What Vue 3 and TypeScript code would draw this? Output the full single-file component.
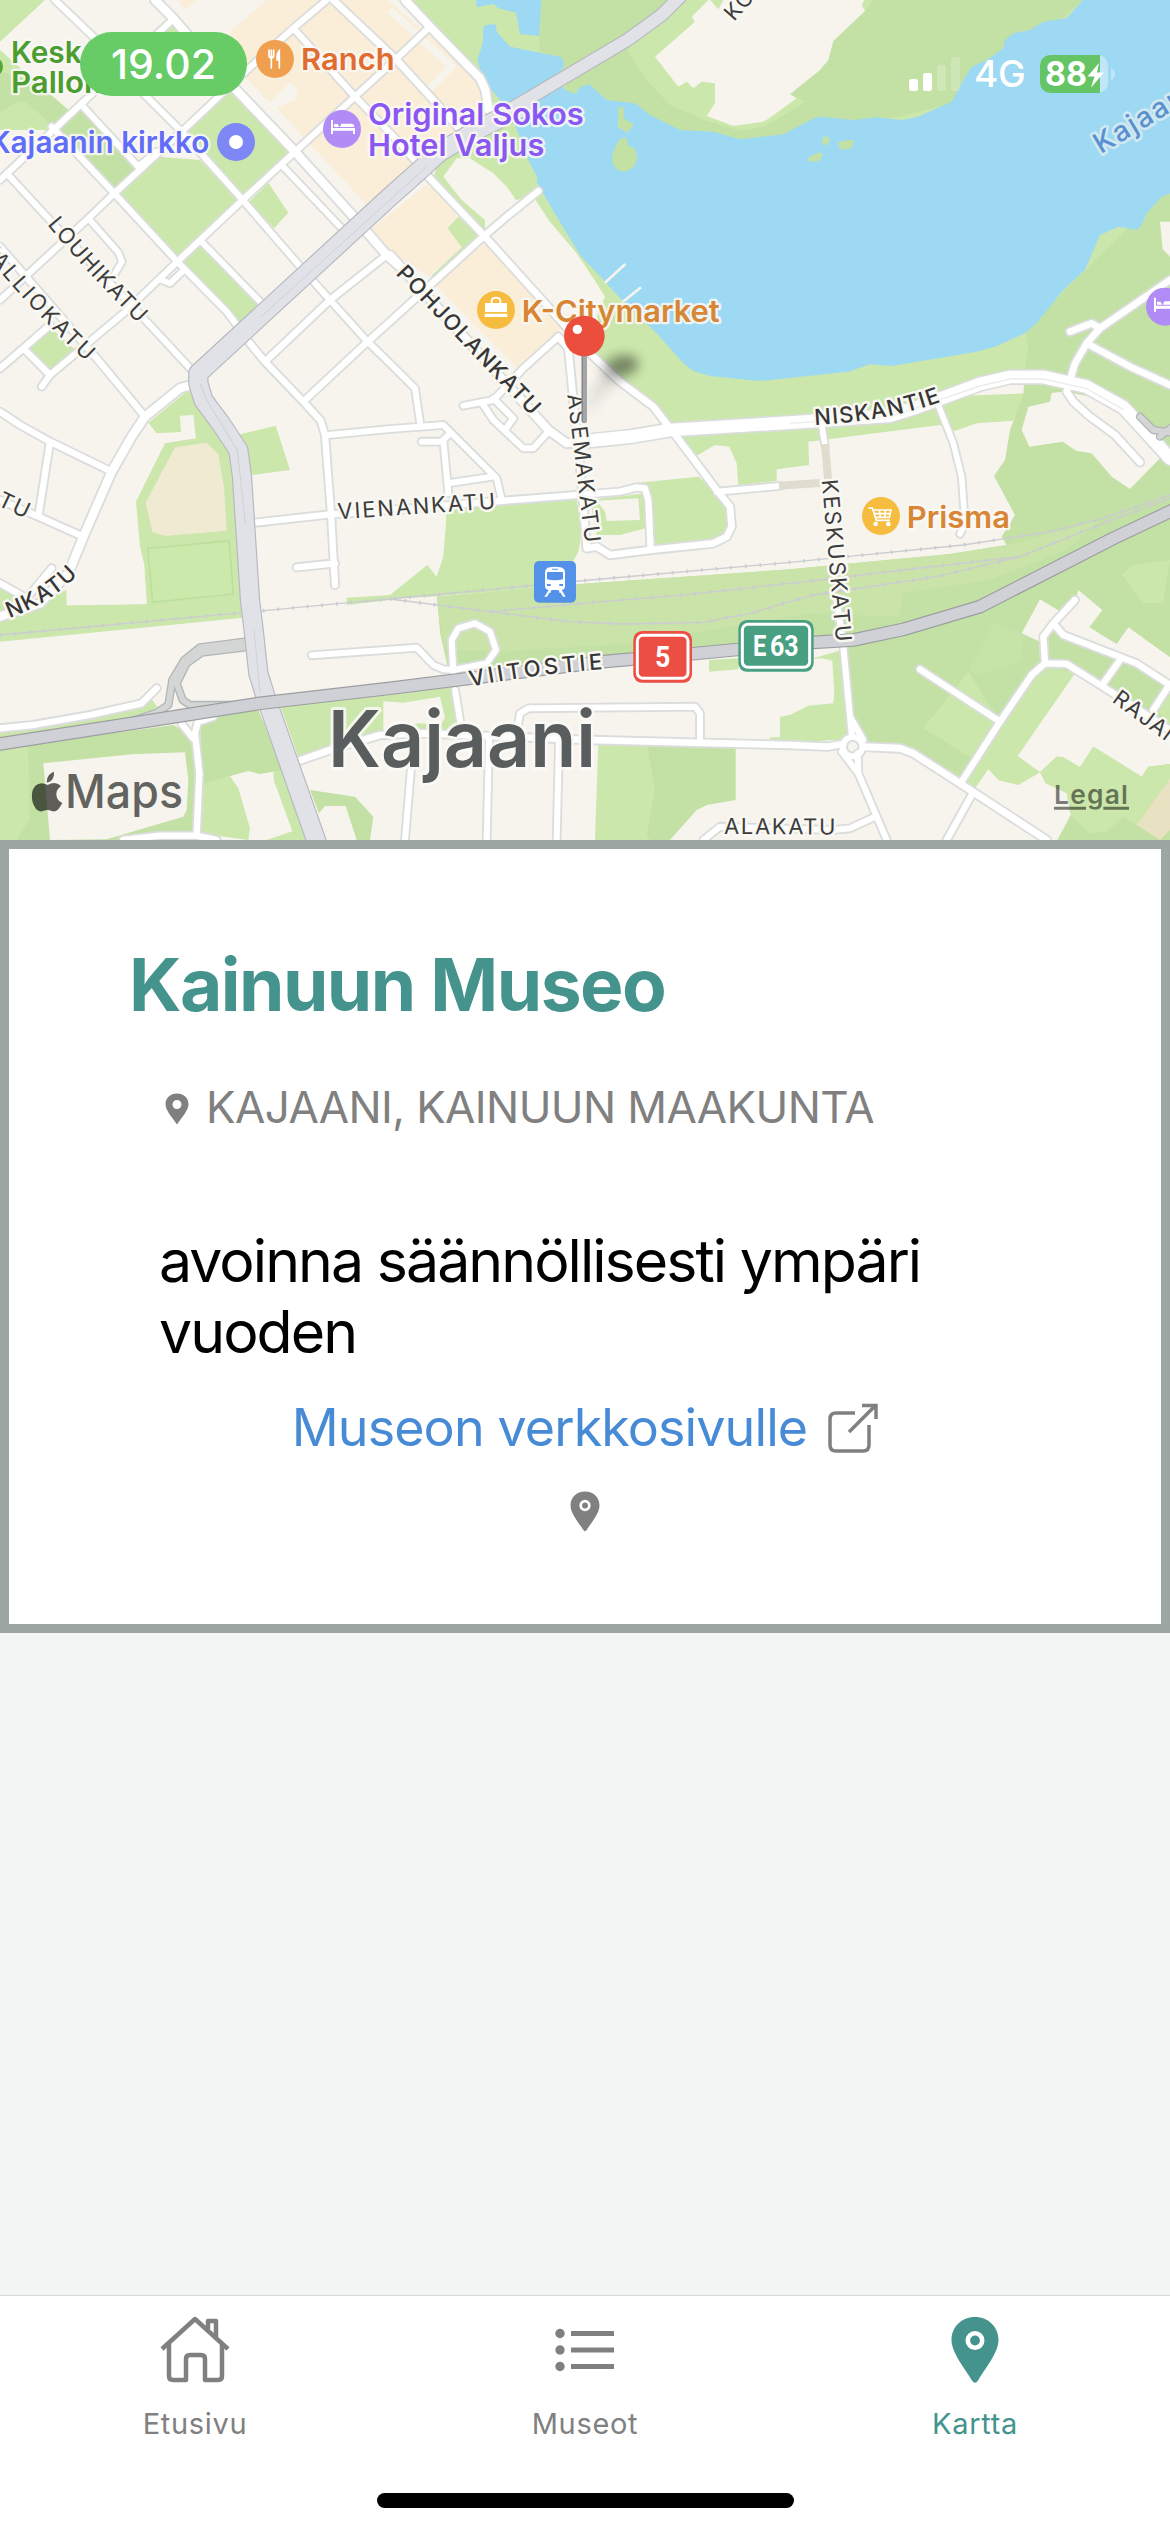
<script setup lang="ts">
interface Area {
  fill: string
  d: string
}

interface Street {
  w: number
  d: string
}

interface StreetName {
  id: string
  text: string
  d: string
  len?: number
  end?: boolean
  bold?: boolean
}

interface Poi {
  lines: string[]
  x: number
  y: number
  color: string
  widths?: number[]
  end?: boolean
}

const LAND = '#f6f4ed'
const PARK = '#cbe7ab'
const WOOD = '#c3e0a5'
const SHOPS = '#faeed9'

// Map units: three per CSS pixel.
const areas: Area[] = [
  // shops around the centre
  { fill: SHOPS, d: 'M800 0H1165L1290 110L1450 245L1465 330L1380 400L1250 505L1100 615L830 325L885 300L895 275L870 245L810 310L740 235L690 95Z' },
  { fill: SHOPS, d: 'M530 0H592L560 28Z' },
  { fill: SHOPS, d: 'M1110 690L1285 550L1375 650L1343 685L1385 742L1285 830L1170 750Z' },
  { fill: SHOPS, d: 'M1460 725L1690 980L1560 1112L1300 850Z' },
  // river banks
  { fill: PARK, d: 'M1230 0L1290 75L1455 245L1475 340L1340 430L1300 530L1455 700L1455 660L1385 600L1330 530L1370 475L1410 475L1480 520L1520 560L1548 600L1600 590L1650 665L1730 760L1790 850L1815 890L1770 1000L1790 1080L1860 1150L1950 1220L2005 1275L2370 1262L2700 1240L3070 1140L3510 1300V0Z' },
  { fill: PARK, d: 'M1375 650L1440 710L1280 850L1300 822L1385 742L1343 685Z' },
  { fill: PARK, d: 'M2030 1310L2085 1370L2145 1335L2188 1340L2210 1390L2215 1455L2330 1443V1408L2427 1395L2425 1325L2820 1275L2865 1293L2930 1270L3040 1262L3080 1180L2810 1190L2700 1240L2370 1285Z' },
  { fill: WOOD, d: 'M1622 0L1618 150L1690 200L1700 300L1900 330L2040 420L2220 440L2370 430L2900 300L3250 0H2620L2595 33L2500 123L2370 283L2415 305L2300 378L2220 392L2120 362L2010 315L1940 240L1880 150L1980 50L2020 0Z' },
  { fill: LAND, d: 'M2125 0L2075 50L2085 65L1965 170L2035 260L2060 245L2080 265L2105 245L2145 250V310L2120 348L2200 378L2290 365L2310 353L2390 295L2370 283L2460 210L2485 180L2500 123L2595 33L2585 15L2593 0Z' },
  { fill: PARK, d: 'M2130 0H2170L2155 28Z' },
  { fill: WOOD, d: 'M3510 560L3075 990L3085 1035L3075 1110L3070 1185L3030 1290L3015 1380L2982 1428L3045 1545L3005 1610L3020 1635L2850 1662L2370 1708L1770 1750L1310 1790L1320 1900L1340 2000L1780 1995L2530 1930L2560 2220L2700 2240L2880 2350L3160 2520H3510Z' },
  { fill: '#c9e3a9', d: 'M1310 1790L1770 1750L2370 1708L2850 1662L3020 1635L3300 1560L3200 1650L2970 1740L2710 1780L2700 1850L2430 1840L1900 1930L1500 1955L1330 1950Z' },
  { fill: LAND, d: 'M3480 665H3510V770L3488 748Z' },
  { fill: LAND, d: 'M3155 1178L3150 1205L3085 1220L3065 1290L3088 1340L3188 1325L3230 1353L3275 1360L3335 1430L3390 1467L3480 1375L3400 1260L3270 1190L3200 1175Z' },
  // east side
  { fill: PARK, d: 'M2440 1975L2525 1950L2550 2220L2460 2220L2310 2215V2000Z' },
  { fill: LAND, d: 'M2215 1985L2440 1977L2465 1975L2497 1982L2503 2080L2500 2110L2425 2117L2340 2160V2212H2310Z' },
  { fill: PARK, d: 'M2905 2015L2770 2185L2915 2275L3000 2165ZM3365 1725L3400 1695L3510 1680L3490 1808L3428 1810Z' },
  { fill: '#c7e4a8', d: 'M2980 1865L3070 1905L3060 1982L2940 2025L2905 2015Z' },
  { fill: PARK, d: 'M2885 2350L3000 2165L3095 2025L3135 1995L3225 2020L3055 2270L3120 2317L3055 2355L2995 2340L2965 2310L2920 2370Z' },
  { fill: LAND, d: 'M3225 2020L3053 2268L3120 2317L3170 2270L3190 2272L3240 2302L3280 2240L3425 2330L3445 2300L3510 2292V2190L3330 2080Z' },
  { fill: PARK, d: 'M3120 2317L3170 2270L3190 2272L3240 2302L3280 2240L3425 2330L3445 2300L3510 2292V2335L3410 2475L3370 2450L3320 2495L3270 2500L3210 2445L3200 2380L3140 2350Z' },
  { fill: LAND, d: 'M2965 2308L2900 2400L3100 2520H3172L3212 2445L3200 2380L3137 2350L3120 2317L3055 2355L2995 2340Z' },
  { fill: '#e8e2c2', d: 'M3510 2335L3410 2475L3480 2520L3510 2490Z' },
  { fill: LAND, d: 'M3120 1798L3065 1900L3120 1925L3160 1870L3182 1835ZM3235 1770L3307 1830L3268 1882L3350 1932L3385 1882L3510 1972V2060L3410 1995L3190 1905L3170 1870L3225 1805Z' },
  { fill: PARK, d: 'M3470 2120L3510 2060V2190Z' },
  { fill: LAND, d: 'M2310 2240L2560 2240L2720 2255L2880 2360L3140 2520H2310Z' },
  // station area
  { fill: PARK, d: 'M1340 1520L1730 1495L1745 1600L1735 1655L1710 1700L1600 1765L1170 1800L1040 1815V1793L1170 1785L1282 1695L1310 1730L1330 1670L1338 1570Z' },
  { fill: PARK, d: 'M1770 1500L1935 1480V1585L1860 1605L1790 1605Z' },
  { fill: LAND, d: 'M1790 1502L1915 1495L1920 1560L1820 1563L1815 1535Z' },
  { fill: PARK, d: 'M1915 1448L2095 1430L2130 1460L2175 1495L2190 1550L2180 1600L2140 1630L1960 1640L1945 1500Z' },
  { fill: PARK, d: 'M2127 1980L2215 1975V2008L2127 2015Z' },
  { fill: PARK, d: 'M2305 2215L2340 2213V2150L2370 2145L2490 2220L2340 2235Z' },
  { fill: LAND, d: 'M1170 1795L1310 1790L1320 1900L1342 1995L1170 2020Z' },
  // south
  { fill: PARK, d: 'M840 2115L1370 2060L1375 2195L1150 2195L900 2285Z' },
  { fill: LAND, d: 'M1150 2104L1210 2108L1320 2090L1335 2155L1320 2175L1255 2170L1170 2190H1150Z' },
  { fill: WOOD, d: 'M930 2370L1065 2390L1120 2450L1110 2520H1070L1037 2418H975L957 2440Z' },
  { fill: PARK, d: 'M1795 2230L1945 2235L1980 2370L1950 2520H1785Z' },
  { fill: WOOD, d: 'M1942 2238L2207 2245V2400L2120 2415L2090 2430L2010 2520H1950L1940 2505L1965 2370Z' },
  { fill: WOOD, d: 'M0 2245L520 2175L580 2210L600 2500L590 2520H0Z' },
  { fill: LAND, d: 'M130 2290L395 2263L555 2257L565 2340L560 2430L550 2450L320 2518L150 2520Z' },
  { fill: PARK, d: 'M0 2245L85 2240L88 2460L50 2520H0ZM605 2350L690 2328L715 2365L750 2485L745 2520L600 2500ZM820 2320L840 2300L925 2520H800L877 2494L822 2342Z' },
  { fill: WOOD, d: 'M600 2160L775 2130L850 2310L780 2322L745 2313L605 2352Z' },
  { fill: PARK, d: 'M0 2190L430 2115L455 2098L475 2125L400 2155L0 2222Z' },
  // school grounds and pitch
  { fill: PARK, d: 'M445 1268L470 1300L543 1296L540 1247L580 1245L588 1315L495 1330L408 1505L420 1640L432 1690L440 1812L200 1816V1770L100 1800L0 1750V1925L730 1853L745 1800L700 1360L610 1230L565 1170Z' },
  { fill: '#f0ead2', d: 'M525 1342L620 1328L655 1362L672 1460L680 1592L495 1608L457 1595L437 1508Z' },
  { fill: LAND, d: 'M200 1690H432L440 1812L200 1816Z' },
  { fill: PARK, d: 'M720 1303L827 1277L870 1410L755 1425Z' },
  // town parks
  { fill: PARK, d: 'M0 0H135L0 125ZM490 85L517 70L545 95L600 150H440ZM0 150L50 195L205 330L150 390H0Z' },
  { fill: WOOD, d: 'M0 215L100 240L205 330L155 385L130 350L75 305H50L0 335ZM180 385L240 330L410 505L343 568Z' },
  { fill: PARK, d: 'M355 580L475 470L600 480L712 600L532 770ZM565 390L690 275L870 455L728 588L600 470ZM748 605L805 548L865 638L822 685ZM545 785L605 735L780 915L720 970ZM85 1045L150 980L225 1050L153 1110Z' },
]

const lake =
  'M1470 72L1450 80L1448 130L1432 180L1450 240L1500 300L1545 375L1585 480L1613 535L1610 545L1635 590L1700 700L1740 765L1815 845L1870 905L1970 1000L2050 1090L2080 1113L2130 1128L2270 1142L2310 1140L2545 1115L2610 1093L2675 1098L2930 1055L2985 1040L3075 1000L3110 970L3190 870L3255 810L3300 705L3355 680L3410 690L3425 675L3440 640L3485 590L3510 580V0H3250L3230 20L3200 55L3130 65L3090 90L3040 100L3015 120L3010 145L2960 180L2915 200L2890 240L2855 305L2750 352L2705 360L2630 352L2560 360L2460 350L2445 353L2350 403L2220 418L2140 395L2040 390L1950 345L1905 310L1820 300L1767 252L1735 265L1730 282L1695 270L1670 225L1690 205V180L1680 170L1530 140L1490 95L1488 75ZM1428 0L1430 22L1480 12L1495 25L1548 38L1560 102L1618 108L1624 0Z'

const islands =
  'M1855 322H1870L1872 355L1902 375L1882 398L1853 382ZM1860 418L1878 412L1886 438L1904 445L1912 475L1902 500L1878 515L1855 512L1838 492L1836 468L1850 430ZM2470 408L2490 414L2482 437L2465 430ZM2512 430L2530 422L2562 420L2556 445L2524 449ZM2423 472L2460 457L2468 462L2460 482L2430 486Z'

const streets: Street[] = [
  // north-west grid
  { w: 18, d: 'M165 0L290 120L430 280L545 395L728 600L905 805L990 900L1103 1025L1180 1100L1245 1165L1262 1280' },
  { w: 25, d: 'M465 0L515 50L690 250L885 455L1065 655L1160 765L1200 800' },
  { w: 20, d: 'M1000 0L1190 180L1300 300L1390 400' },
  { w: 24, d: 'M1215 0L1290 80L1440 235L1456 270L1466 330' },
  { w: 18, d: 'M980 0L880 85L725 225L545 395L343 580L265 655L0 900M880 85L1065 290L1200 430L1260 500M1290 80L1190 175L1065 290L885 455L728 600L532 785L370 940L150 1125L125 1160' },
  { w: 18, d: 'M515 62L240 315L0 540M20 520L140 650L450 975L580 1115M155 380L343 580L532 785L680 935L725 995M245 315L415 500L470 455' },
  { w: 17, d: 'M265 655L355 757L366 785L345 820M480 838L510 850L550 812M605 725L790 915M845 495L1030 690' },
  { w: 19, d: 'M725 1000L795 1085L910 1205L962 1262L975 1305L993 1540L1005 1755M1160 765L990 900L795 1085M910 1205L1103 1025L1170 965L1450 710L1520 650L1615 573' },
  { w: 19, d: 'M0 740L290 1075L435 1250M70 1045L150 1125M0 1105L70 1045L150 975' },
  { w: 25, d: 'M575 1155L540 1165L435 1250L395 1310L335 1415L250 1610L205 1720L120 1810L0 1850' },
  { w: 19, d: 'M0 1235L60 1275L150 1325L335 1415M150 1325L115 1550M0 1500L115 1550L250 1610M0 1750L80 1795L155 1705' },
  // station side
  { w: 18, d: 'M985 1305L1170 1287L1330 1275L1490 1435L1505 1500M1265 1325H1325L1350 1300M1330 1320L1345 1480M1345 1450L1475 1430' },
  { w: 19, d: 'M765 1568L990 1543L1170 1530L1500 1503L1860 1475L1910 1462L1935 1465L1945 1500L1952 1650M890 1702L1005 1690' },
  { w: 18, d: 'M935 1966L1250 1943L1300 1995L1330 2008L1360 2010M1360 2020L1355 1920L1375 1885L1425 1870L1470 1895L1488 1950L1460 1990L1360 2010M1365 2070L1380 2160' },
  { w: 18, d: 'M1555 2170L1560 2140L1585 2125L2085 2120L2100 2140V2230M1240 2220L1215 2520M1467 2220L1460 2520M1677 2225L1670 2520' },
  { w: 20, d: 'M890 2285L990 2250L1140 2205L1270 2200L1770 2220L2370 2235L2480 2240L2530 2232' },
  { w: 20, d: 'M1675 1010L1705 1045L1720 1200L1745 1450L1760 1645L1790 1640L1830 1665L1950 1650L2140 1630L2180 1610L2195 1580L2190 1520L2150 1470L2030 1310L1960 1220L1860 1145L1770 1060L1455 710L1285 530' },
  { w: 24, d: 'M1170 765L1645 1290L1700 1330L1770 1325' },
  { w: 18, d: 'M1675 1010L1570 1105L1480 1200L1390 1217M1480 1195L1540 1255L1515 1290M1450 1215L1480 1260L1570 1345H1600L1645 1295M2150 1475L2340 1458' },
  // east
  { w: 17, d: 'M2465 1275L2475 1335M2815 1215L2860 1330L2885 1430L2895 1570L2880 1602' },
  { w: 20, d: 'M3510 840L3300 985L3260 1030L3225 1090L3200 1175L3220 1205L3270 1250L3345 1305L3420 1387M3210 995L3275 970L3300 985M3260 1030L3390 1100L3510 1155' },
  { w: 18, d: 'M2510 1800L2530 1940L2550 2150L2556 2210M2550 2150L2590 2220M2525 2255L2575 2320L2660 2520M2573 2260L2575 2320M2625 2450L2550 2485L2500 2490L2160 2480L2110 2520' },
  { w: 21, d: 'M2590 2240L2700 2245L2740 2260L2880 2350L3140 2520' },
  { w: 19, d: 'M2915 2385L2840 2520M2885 2345L3000 2165L3095 2025L3135 1990L3130 1910L3160 1870L3225 1800M2760 2008L3000 2165M3135 1990L3200 1992L3340 2080L3510 2190M3160 1870L3190 1905L3410 1990L3510 2055M3360 1980L3310 2050M3505 2060L3460 2130' },
  // south-west
  { w: 19, d: 'M0 2185L100 2175L270 2145L425 2110L470 2065M595 2160L585 2200L598 2320L590 2505M545 2172L580 2215M595 2165L640 2150M370 2520L480 2507L590 2507L650 2520' },
]

const niskantie = 'M1740 1325L1890 1310L2010 1290L2370 1268L2670 1247L2750 1222L2940 1152L3030 1131H3130L3260 1160L3370 1222L3510 1375'
const highways: Street[] = [
  { w: 36, d: 'M2050 -20L1985 45L1885 118L1570 305L1440 380' },
  { w: 54, d: 'M1570 320L1440 385L1320 455L1260 510L1170 590L595 1120V1150L610 1200L662 1270L715 1350L726 1430L750 1800L762 1900L775 2020L795 2085L955 2540' },
]
const ramps = 'M735 1925L600 1942L553 1980L517 2040L505 2115L470 2138L390 2165M735 1942L605 1958L560 1990L530 2050L548 2100L570 2115H700M3420 1250L3460 1290L3510 1297M3480 1310L3510 1285'
const trunk = 'M0 2232L780 2110L1170 2065L1810 1985L2070 1962L2440 1927L2560 1920L2710 1888L2940 1820L3340 1615L3530 1525'
const rails = [
  'M0 1905L730 1838L1045 1808L1170 1797L1770 1740L2370 1687L2540 1670L2890 1635L3150 1595L3310 1555L3510 1485',
  'M1170 1797L1470 1835L1710 1865L1870 1872L2110 1867L2250 1840L2370 1805L2440 1785L2810 1730L3060 1670L3310 1570L3510 1495',
  'M1470 1835L1770 1808L2070 1783L2370 1750L2710 1710L3060 1670',
]

const streetNames: StreetName[] = [
  { id: 'louhi', text: 'LOUHIKATU', d: 'M141 674Q270 830 450 1005', len: 408 },
  { id: 'kallio', text: 'KALLIOKATU', d: 'M-62 740Q90 930 285 1110', len: 475 },
  { id: 'pohjola', text: 'POHJOLANKATU', d: 'M1186 822L1620 1275', len: 594, bold: true },
  { id: 'asema', text: 'ASEMAKATU', d: 'M1702 1184L1760 1665', len: 452 },
  { id: 'keskus', text: 'KESKUSKATU', d: 'M2465 1440L2512 1965', len: 492 },
  { id: 'viena', text: 'VIENANKATU', d: 'M1014 1558L1525 1523', len: 478 },
  { id: 'viitos', text: 'VIITOSTIE', d: 'M1412 2060Q1610 2020 1860 2004', len: 404, bold: true },
  { id: 'niska', text: 'NISKANTIE', d: 'M2444 1275Q2680 1264 2870 1188', len: 390, bold: true },
  { id: 'ala', text: 'ALAKATU', d: 'M2172 2502L2550 2504', len: 338 },
  { id: 'rajan', text: 'RAJAN', d: 'M3334 2104L3700 2372' },
  { id: 'koski', text: 'KO', d: 'M2202 66L2420 -180' },
  { id: 'tu', text: 'TU', d: 'M-110 1468L80 1558', end: true },
  { id: 'nkatu', text: 'NKATU', d: 'M-300 1905Q60 1905 236 1722', end: true, bold: true },
]

const pois: Poi[] = [
  { lines: ['Kesk', 'Pallok'], x: 33, y: 188, color: '#4c9d2f', widths: [212, 272] },
  { lines: ['Ranch'], x: 903, y: 210, color: '#e06c2f', widths: [281] },
  { lines: ['Kajaanin kirkko'], x: 628, y: 460, color: '#5f6df8', widths: [659], end: true },
  { lines: ['Original Sokos', 'Hotel Valjus'], x: 1104, y: 375, color: '#8a57f2', widths: [647, 529] },
  { lines: ['K-Citymarket'], x: 1565, y: 966, color: '#d98634', widths: [594] },
  { lines: ['Prisma'], x: 2720, y: 1583, color: '#d98634', widths: [310] },
]

const tabs = [
  { id: 'home', label: 'Etusivu', active: false },
  { id: 'list', label: 'Museot', active: false },
  { id: 'map', label: 'Kartta', active: true },
]
</script>

<template>
  <div class="screen">
    <section class="map">
      <svg class="map-canvas" viewBox="0 0 3510 2520" width="1170" height="840">
        <defs>
          <filter id="soft" x="-50%" y="-50%" width="200%" height="200%"><feGaussianBlur stdDeviation="18" /></filter>
          <linearGradient id="shade" x1="0" y1="1" x2="0" y2="0">
            <stop offset="0" stop-color="#000" stop-opacity="0.02" />
            <stop offset="1" stop-color="#000" stop-opacity="0.2" />
          </linearGradient>
          <path v-for="n in streetNames" :id="'way-' + n.id" :key="n.id" :d="n.d" />
        </defs>
        <rect width="3510" height="2520" :fill="LAND" />
        <path v-for="(a, i) in areas" :key="'a' + i" :fill="a.fill" :d="a.d" />
        <path d="M443 1645L687 1623L700 1782L458 1807Z" fill="#cce9ac" stroke="#bcdf9c" stroke-width="5" />
        <path d="M1170 30L1355 200L1285 270V300" fill="none" stroke="#f6f4ed" stroke-width="22" />
        <path :d="lake" fill="#9ed9f3" />
        <path :d="islands" :fill="WOOD" />
        <path d="M1815 848L1876 792M1868 906L1923 862" stroke="#f6f4ed" stroke-width="8" />

        <g class="lines">
          <g v-for="(r, i) in rails" :key="'r' + i" stroke="#cbccd1">
            <path :d="r" stroke-width="4" />
            <path :d="r" stroke-width="11" stroke-dasharray="5 39" />
          </g>
          <g stroke="#dbdddc">
            <path v-for="(s, i) in streets" :key="'c' + i" :d="s.d" :stroke-width="s.w + 11" />
            <path :d="niskantie" stroke-width="48" />
            <circle cx="2558" cy="2240" r="29" stroke-width="29" />
          </g>
          <g stroke="#fff">
            <path v-for="(s, i) in streets" :key="'s' + i" :d="s.d" :stroke-width="s.w" />
            <path :d="niskantie" stroke-width="38" />
            <circle cx="2558" cy="2240" r="29" stroke-width="17" />
          </g>
          <path d="M2370 1270L2670 1250L2940 1158L3030 1137H3130L3260 1166L3370 1228" stroke="#ececec" stroke-width="4" />
          <path d="M2475 1332L2485 1450M2337 1457L2460 1449" stroke="#e0dccf" stroke-width="24" class="butt" />
          <path :d="ramps" stroke="#b3b6b6" stroke-width="25" />
          <path :d="ramps" stroke="#d4d6d6" stroke-width="17" />
          <path v-for="(h, i) in highways" :key="'hc' + i" :d="h.d" stroke="#b7b9bf" :stroke-width="h.w + 7" />
          <path v-for="(h, i) in highways" :key="'hf' + i" :d="h.d" stroke="#e1e2e7" :stroke-width="h.w" />
          <path d="M1280 500L1170 600L785 948M600 1150L620 1200L712 1350L722 1440L736 1570M762 1890L780 2080" stroke="#cfd0d5" stroke-width="3" />
          <path :d="trunk" stroke="#9c9ea1" stroke-width="41" />
          <path :d="trunk" stroke="#d0d1d6" stroke-width="34" />
        </g>

        <g class="street-names">
          <text v-for="n in streetNames" :key="n.id" :class="{ major: n.bold }" :text-anchor="n.end ? 'end' : 'start'" :textLength="n.len">
            <textPath :href="'#way-' + n.id" :startOffset="n.end ? '100%' : '0'" :textLength="n.len">{{ n.text }}</textPath>
          </text>
        </g>
        <text class="river" transform="translate(3302 463) rotate(-31)">Kajaan</text>

        <g class="poi-icons">
          <circle cx="-22" cy="200" r="31" fill="#4fa935" />
          <circle cx="825" cy="177" r="57" fill="#f09f4f" />
          <g stroke="#fff" fill="none" stroke-width="5" stroke-linecap="round">
            <path d="M807 150V166Q807 174 814 174Q821 174 821 166V150M814 150V204" />
            <path d="M838 204V152Q830 160 831 180H838" fill="#fff" />
          </g>
          <circle cx="1026" cy="387" r="57" fill="#b18cf7" />
          <path d="M993 360H999V384H1065V402H1059V392H999V402H993ZM1002 381V372H1013L1018 381ZM1020 381L1024 371H1054Q1063 371 1063 381Z" fill="#fff" />
          <circle cx="708" cy="426" r="57" fill="#7d87f5" />
          <circle cx="708" cy="426" r="21" fill="#fff" />
          <circle cx="1488" cy="930" r="57" fill="#f5bc40" />
          <path d="M1475 908V903A13 10 0 0 1 1501 903V908" fill="none" stroke="#fff" stroke-width="6" />
          <path d="M1455 909H1521V936H1455ZM1454 941H1522V951H1454Z" fill="#fff" />
          <circle cx="2643" cy="1548" r="57" fill="#f5bc40" />
          <path d="M2605 1524H2617L2629 1561H2670M2620 1530H2673L2668 1552H2626M2622 1541H2671M2638 1530L2641 1552M2656 1530L2654 1552" fill="none" stroke="#fff" stroke-width="5" />
          <circle cx="2627" cy="1572" r="7" fill="#fff" /><circle cx="2665" cy="1572" r="7" fill="#fff" />
          <circle cx="3495" cy="920" r="57" fill="#b18cf7" />
          <path d="M3462 893H3468V917H3534V935H3528V926H3468V935H3462ZM3471 914V905H3482L3487 914ZM3489 914L3493 904H3520V914Z" fill="#fff" />
          <rect x="1602" y="1683" width="126" height="125" rx="15" fill="#5492ea" />
          <path d="M1650 1702Q1665 1698 1680 1702Q1695 1704 1695 1718V1758Q1695 1768 1685 1770L1697 1790H1689L1682 1778H1648L1641 1790H1633L1646 1770Q1635 1768 1635 1758V1718Q1635 1704 1650 1702Z" fill="#fff" />
          <path d="M1643 1716H1687Q1689 1716 1689 1719V1738Q1665 1744 1641 1738V1719Q1641 1716 1643 1716ZM1656 1706H1674V1709H1656ZM1641 1752H1652V1758H1641ZM1678 1752H1689V1758H1678ZM1652 1774L1655 1770H1675L1678 1774V1790H1652Z" fill="#5492ea" />
        </g>

        <g class="shields">
          <rect x="1900" y="1893" width="176" height="155" rx="26" fill="#ec4e44" />
          <rect x="1912" y="1906" width="152" height="129" rx="17" fill="none" stroke="#fff" stroke-width="9" />
          <text x="1965" y="2000" textLength="46" lengthAdjust="spacingAndGlyphs">5</text>
          <rect x="2215" y="1860" width="226" height="155" rx="26" fill="#489f81" />
          <rect x="2227" y="1873" width="202" height="129" rx="17" fill="none" stroke="#fff" stroke-width="9" />
          <text x="2259" y="1968" textLength="40" lengthAdjust="spacingAndGlyphs">E</text>
          <text x="2310" y="1968" textLength="86" lengthAdjust="spacingAndGlyphs">63</text>
        </g>

        <g class="poi-names">
          <template v-for="p in pois" :key="p.lines[0]">
            <text
              v-for="(line, i) in p.lines"
              :key="line"
              :x="p.x"
              :y="p.y + i * 92"
              :fill="p.color"
              :text-anchor="p.end ? 'end' : 'start'"
              :textLength="p.widths?.[i]"
              lengthAdjust="spacingAndGlyphs"
            >{{ line }}</text>
          </template>
        </g>
        <text class="town" x="984" y="2300" textLength="804" lengthAdjust="spacingAndGlyphs">Kajaani</text>

        <g>
          <path d="M1760 1265L1765 1190L1850 1070Q1930 1060 1900 1115Q1850 1150 1810 1180Z" fill="url(#shade)" filter="url(#soft)" />
          <ellipse cx="1862" cy="1098" rx="56" ry="30" transform="rotate(-12 1862 1098)" fill="#000" opacity="0.3" filter="url(#soft)" />
          <rect x="1745" y="1060" width="16" height="210" rx="7" fill="#a3a5a6" />
          <rect x="1745" y="1060" width="4" height="205" fill="#858788" />
          <circle cx="1753" cy="1008" r="61" fill="#ec4e3d" />
          <circle cx="1732" cy="988" r="14" fill="#fff" />
        </g>

        <g class="maps-logo">
          <path d="M162 2315Q163 2335 152 2343Q146 2348 140 2347Q140 2333 147 2325Q154 2317 162 2315ZM183 2359Q168 2369 169 2384Q170 2401 187 2409Q181 2420 175 2428Q167 2437 155 2433Q142 2427 129 2433Q117 2437 108 2427Q93 2406 96 2382Q99 2352 124 2350Q134 2350 143 2355Q153 2349 163 2349Q176 2350 183 2359Z" />
          <text x="195" y="2425" textLength="354" lengthAdjust="spacingAndGlyphs">Maps</text>
        </g>
        <g class="legal">
          <text x="3162" y="2413" textLength="222">Legal</text>
          <path d="M3162 2420H3258V2429H3162ZM3310 2420H3387V2429H3310Z" />
        </g>
      </svg>

      <header class="status">
        <div class="clock">19.02</div>
        <div class="indicators">
          <svg width="51" height="35" viewBox="0 0 51 35" fill="#fff">
            <rect y="22" width="9" height="12" rx="2.5" />
            <rect x="14" y="16" width="9" height="18" rx="2.5" />
            <rect x="28" y="8" width="9" height="26" rx="2.5" opacity="0.2" />
            <rect x="42" width="9" height="34" rx="2.5" opacity="0.2" />
          </svg>
          <span class="network">4G</span>
          <svg width="76" height="38" viewBox="0 0 76 38">
            <rect width="68" height="38" rx="10" fill="#fff" opacity="0.35" />
            <path d="M10 0H60V38H10A10 10 0 0 1 0 28V10A10 10 0 0 1 10 0Z" fill="#65c466" />
            <path d="M71 13Q75 15 75 19Q75 23 71 25Z" fill="#fff" opacity="0.35" />
            <text class="charge" x="5" y="31" textLength="42" lengthAdjust="spacingAndGlyphs">88</text>
            <path d="M59 8L47.500 21.500H54.500L51 32.500L64 17.500H57Z" fill="#fff" />
          </svg>
        </div>
      </header>
    </section>

    <article class="card">
      <h1 class="title">Kainuun Museo</h1>
      <p class="place">
        <svg width="24" height="32" viewBox="0 0 24 32">
          <path d="M12 0.500C5.500 0.500 0.500 5 0.500 11C0.500 17.500 7 24 12 31.500C17 24 23.500 17.500 23.500 11C23.500 5 18.500 0.500 12 0.500ZM12 7A4.500 4.500 0 1 1 12 16A4.500 4.500 0 1 1 12 7Z" fill="#808080" fill-rule="evenodd" />
        </svg>
        <span>KAJAANI, KAINUUN MAAKUNTA</span>
      </p>
      <p class="hours">avoinna säännöllisesti ympäri<br />vuoden</p>
      <a class="site">
        <span>Museon verkkosivulle</span>
        <svg width="50" height="50" viewBox="0 0 50 50" fill="none" stroke="#808080" stroke-width="3.500">
          <path d="M27 10H8Q2 10 2 16V42Q2 48 8 48H35Q41 48 41 42V22" />
          <path d="M21 29L47 3M34 2.500H48V16" />
        </svg>
      </a>
      <svg class="spot" width="30" height="41" viewBox="0 0 30 41">
        <path d="M15 0.500C6.500 0.500 0.500 6.500 0.500 14.500C0.500 22.500 9 32 13 38.500Q15 42 17 38.500C21 32 29.500 22.500 29.500 14.500C29.500 6.500 23.500 0.500 15 0.500Z" fill="#808080" />
        <circle cx="15" cy="14.500" r="4.300" fill="none" stroke="#fff" stroke-width="2.700" />
      </svg>
    </article>

    <div class="blank"></div>

    <nav class="tabs">
      <div class="tab-row">
        <div v-for="tab in tabs" :key="tab.id" class="tab" :class="{ active: tab.active }">
          <svg v-if="tab.id === 'home'" width="70" height="68" viewBox="0 0 70 68" fill="none" stroke="#808080" stroke-width="4.500" stroke-linejoin="round">
            <path d="M2 33L35 3L68 33" />
            <path d="M9 28V60Q9 64 13 64H26V43Q26 39 30 39H41Q45 39 45 43V64H58Q62 64 62 60V28" />
            <path d="M48 13V5H56V21" />
          </svg>
          <svg v-else-if="tab.id === 'list'" width="60" height="68" viewBox="0 0 60 68" fill="#808080">
            <g v-for="y in [17.5, 34, 50.5]" :key="y">
              <circle cx="5" :cy="y" r="4.700" />
              <rect x="16" :y="y - 2.5" width="43" height="5" />
            </g>
          </svg>
          <svg v-else width="48" height="68" viewBox="0 0 48 68">
            <path d="M24 1C10.500 1 0.500 11 0.500 24C0.500 37 15 54 21 64.500Q24 69 27 64.500C33 54 47.500 37 47.500 24C47.500 11 37.500 1 24 1Z" fill="#44938d" />
            <circle cx="24" cy="24.500" r="7.200" fill="none" stroke="#fff" stroke-width="4.600" />
          </svg>
          <span>{{ tab.label }}</span>
        </div>
      </div>
      <div class="home-bar"></div>
    </nav>
  </div>
</template>

<style scoped>
.screen {
  display: flex;
  flex-direction: column;
  width: 1170px;
  height: 2532px;
  overflow: hidden;
  background: #f3f5f4;
  font-family: Inter, 'Liberation Sans', sans-serif;
}

.map {
  position: relative;
  flex: none;
  width: 1170px;
  height: 840px;
  overflow: hidden;
}

.map-canvas {
  display: block;
}

.lines path,
.lines circle {
  fill: none;
  stroke-linejoin: round;
}

.lines path {
  stroke-linecap: round;
}

.lines path[stroke-dasharray],
.lines path.butt {
  stroke-linecap: butt;
}

.street-names text {
  font-size: 66px;
  font-weight: 400;
  letter-spacing: 4px;
  fill: #3d3d3d;
  stroke: #f9f8f3;
  stroke-width: 15px;
  stroke-linejoin: round;
  paint-order: stroke;
}

.street-names .major {
  font-weight: 500;
  fill: #363636;
}

.river {
  font-size: 84px;
  font-weight: 500;
  letter-spacing: 6px;
  fill: #5a90cf;
  stroke: #d0e8f1;
  stroke-width: 16px;
  stroke-linejoin: round;
  paint-order: stroke;
}

.poi-names text {
  font-size: 91px;
  font-weight: 600;
  stroke: rgba(250, 249, 246, 0.85);
  stroke-width: 14px;
  stroke-linejoin: round;
  paint-order: stroke;
}

.town {
  font-size: 234px;
  font-weight: 600;
  fill: #5a5d5e;
  stroke: rgba(250, 249, 246, 0.85);
  stroke-width: 18px;
  stroke-linejoin: round;
  paint-order: stroke;
}

.shields text {
  font-family: Roboto, Inter, sans-serif;
  font-size: 90px;
  font-weight: 700;
  fill: #fff;
}

.maps-logo {
  fill: rgba(0, 0, 0, 0.62);
}

.maps-logo text {
  font-size: 140px;
  font-weight: 500;
}

.legal {
  fill: rgba(0, 0, 0, 0.5);
}

.legal text {
  font-size: 79px;
  font-weight: 600;
}

.status {
  position: absolute;
  inset: 0 0 auto 0;
  display: flex;
  justify-content: space-between;
  align-items: flex-start;
  padding: 32px 54px 0 80px;
}

.clock {
  width: 167px;
  height: 64px;
  border-radius: 32px;
  background: #67cb66;
  color: #fff;
  font-size: 41px;
  font-weight: 500;
  line-height: 64px;
  text-align: center;
}

.indicators {
  display: flex;
  align-items: center;
  padding-top: 23px;
  height: 38px;
}

.network {
  width: 66px;
  padding-left: 14px;
  color: #fff;
  font-size: 37px;
  font-weight: 500;
  letter-spacing: -0.3px;
  line-height: 40px;
}

.indicators svg {
  flex: none;
}

.charge {
  font-size: 34px;
  font-weight: 700;
  fill: #fff;
}

.card {
  flex: none;
  display: flex;
  flex-direction: column;
  box-sizing: border-box;
  height: 793px;
  border: 9px solid #9ca6a3;
  padding: 91px 120px 0;
  background: #fff;
}

.title {
  margin: 0;
  color: #44938d;
  font-size: 73px;
  font-weight: 700;
  line-height: 90px;
  letter-spacing: -1.55px;
  white-space: nowrap;
}

.place {
  display: flex;
  align-items: center;
  gap: 17px;
  margin: 49px 0 0 36px;
  color: #808080;
  font-size: 44px;
  line-height: 56px;
  letter-spacing: -0.6px;
  white-space: nowrap;
}

.place svg {
  margin-top: 3px;
}

.hours {
  margin: 90px 0 0 30px;
  color: #000;
  font-size: 59px;
  line-height: 71px;
  letter-spacing: -1.95px;
  white-space: nowrap;
}

.site {
  display: flex;
  align-items: center;
  align-self: center;
  gap: 21px;
  margin-top: 29px;
  color: #478bd6;
  font-size: 52px;
  line-height: 64px;
  letter-spacing: -0.9px;
  white-space: nowrap;
}

.spot {
  align-self: center;
  margin-top: 31px;
}

.blank {
  flex: 1;
}

.tabs {
  flex: none;
  display: flex;
  flex-direction: column;
  align-items: center;
  box-sizing: border-box;
  height: 237px;
  border-top: 1px solid #d4d9d7;
  background: #fff;
}

.tab-row {
  display: flex;
  width: 100%;
}

.tab {
  flex: 1;
  display: flex;
  flex-direction: column;
  align-items: center;
  padding-top: 20px;
  color: #808080;
  font-size: 29px;
  line-height: 36px;
  letter-spacing: 0.7px;
}

.tab svg {
  margin-bottom: 22px;
}

.tab.active {
  color: #44938d;
}

.home-bar {
  width: 417px;
  height: 15px;
  margin-top: 51px;
  border-radius: 8px;
  background: #000;
}
</style>
